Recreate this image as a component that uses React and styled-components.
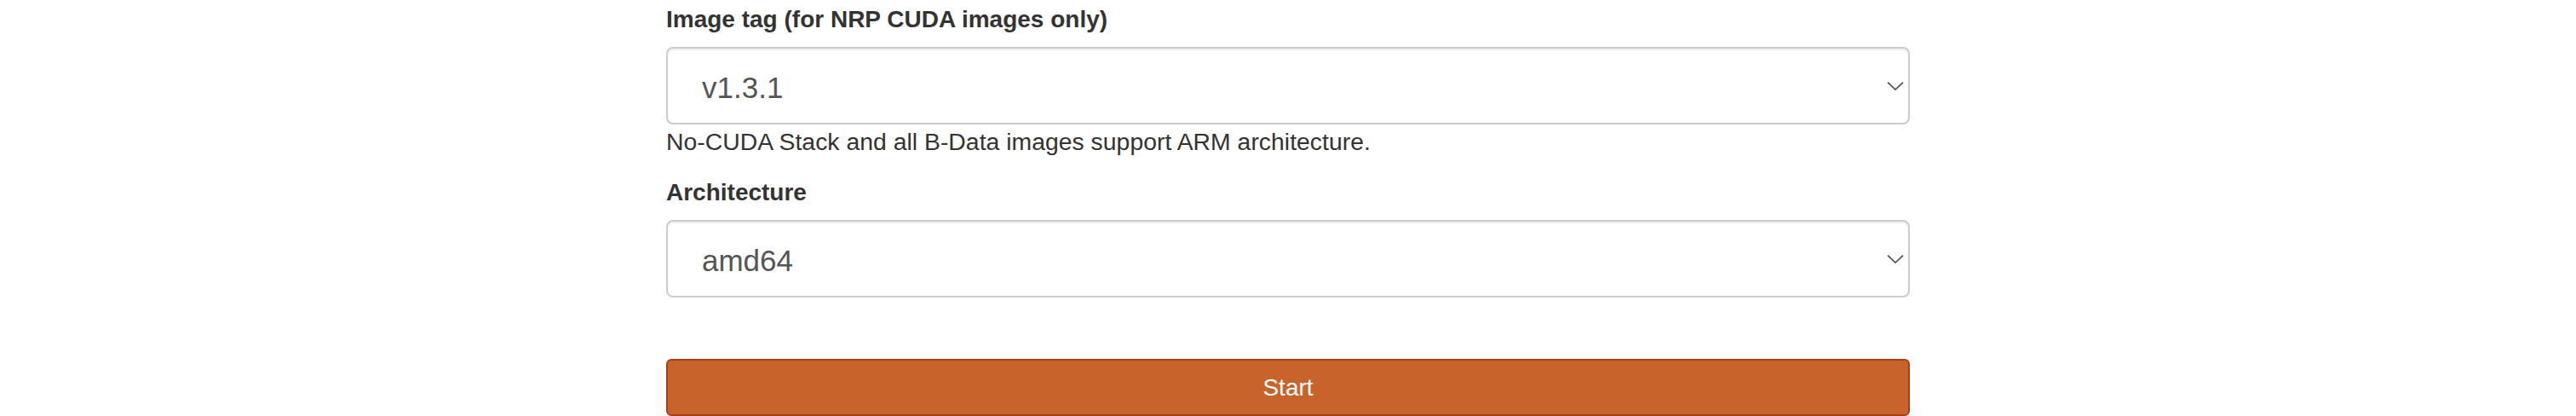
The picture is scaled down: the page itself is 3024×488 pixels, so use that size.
import React, { useState } from "react";
import styled, { createGlobalStyle } from "styled-components";

const GlobalStyle = createGlobalStyle`
  body {
    margin: 0;
    background: #fff;
    font-family: "Liberation Sans", Arial, Helvetica, sans-serif;
    color: #333;
  }
`;

export default function App() {
  const [tag, setTag] = useState("v1.3.1");
  const [arch, setArch] = useState("amd64");

  return (
    <>
      <GlobalStyle />
      <Form onSubmit={(e) => e.preventDefault()}>
        <Label htmlFor="image-tag">Image tag (for NRP CUDA images only)</Label>
        <SelectWrap>
          <Select id="image-tag" value={tag} onChange={(e) => setTag(e.target.value)}>
            <option>v1.3.1</option>
            <option>v1.3.0</option>
            <option>v1.2.0</option>
          </Select>
          <Chevron />
        </SelectWrap>
        <HelpText>No-CUDA Stack and all B-Data images support ARM architecture.</HelpText>

        <Label htmlFor="arch" $spaced>
          Architecture
        </Label>
        <SelectWrap>
          <Select id="arch" value={arch} onChange={(e) => setArch(e.target.value)}>
            <option>amd64</option>
            <option>arm64</option>
          </Select>
          <Chevron />
        </SelectWrap>

        <StartButton type="submit">Start</StartButton>
      </Form>
    </>
  );
}

function Chevron() {
  return (
    <ChevronIcon width="20" height="11" viewBox="0 0 20 11" aria-hidden="true">
      <path d="M1 1.2 L10 9.6 L19 1.2" fill="none" stroke="#555" strokeWidth="1.8" />
    </ChevronIcon>
  );
}

const Form = styled.form`
  width: 1460px;
  margin: 0 auto;
  padding-top: 3px;
  display: flex;
  flex-direction: column;
`;

const Label = styled.label`
  display: block;
  font-size: 28px;
  line-height: 40px;
  font-weight: 700;
  color: #333;
  margin-top: ${(p) => (p.$spaced ? "20px" : "0")};
  margin-bottom: 12px;
`;

const SelectWrap = styled.div`
  position: relative;
`;

const Select = styled.select`
  display: block;
  width: 100%;
  height: 91px;
  box-sizing: border-box;
  appearance: none;
  -webkit-appearance: none;
  background: #fff;
  border: 2px solid #ccc;
  border-radius: 8px;
  box-shadow: inset 0 2px 2px rgba(0, 0, 0, 0.075);
  padding: 3px 40px 0 40px;
  font-family: "Liberation Sans", Arial, sans-serif;
  font-size: 35px;
  color: #555;
  outline: none;
`;

const ChevronIcon = styled.svg`
  position: absolute;
  right: 7px;
  top: 50%;
  transform: translateY(-50%);
  pointer-events: none;
`;

const HelpText = styled.p`
  margin: 0;
  font-size: 28.4px;
  line-height: 40px;
  color: #333;
`;

const StartButton = styled.button`
  margin-top: 72px;
  height: 67px;
  width: 100%;
  background: #c8642b;
  border: 2px solid #a5401f;
  border-radius: 6px;
  color: #fff;
  font-family: "Liberation Sans", Arial, sans-serif;
  font-size: 28px;
  cursor: pointer;
`;
